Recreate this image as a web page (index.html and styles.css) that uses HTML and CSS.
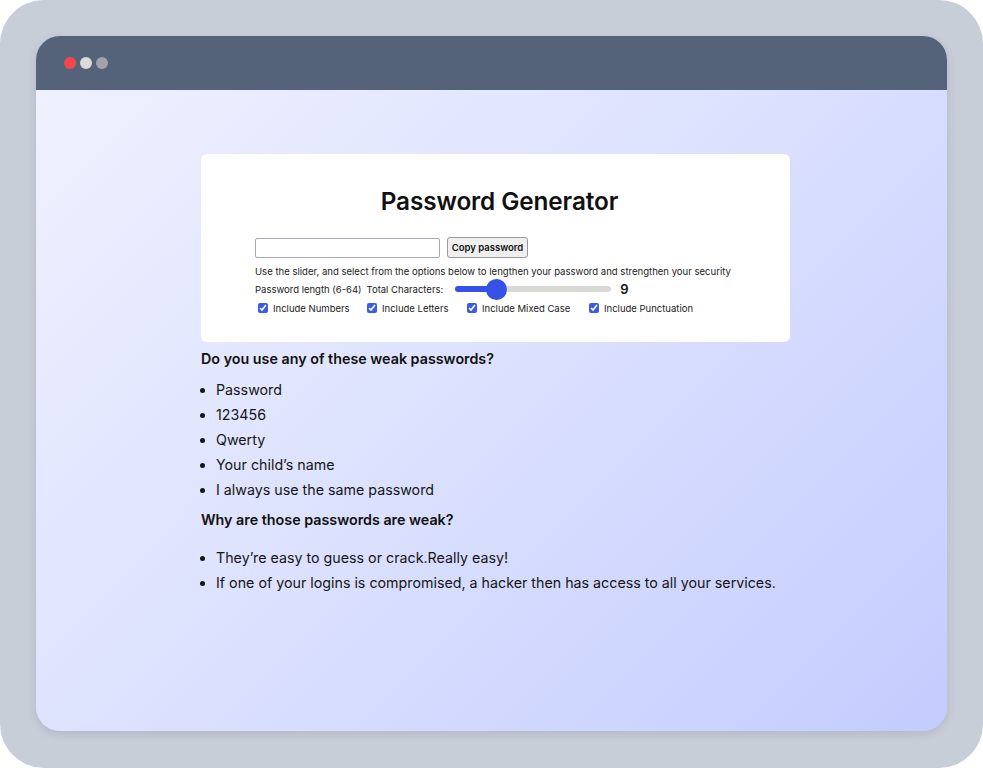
FILE: index.html
```html
<!DOCTYPE html>
<html lang="en">
<head>
<meta charset="utf-8">
<title>Password Generator</title>
<link rel="stylesheet" href="styles.css">
</head>
<body>
<div class="frame">
  <div class="window">
    <div class="titlebar">
      <span class="dot dot-red"></span>
      <span class="dot dot-light"></span>
      <span class="dot dot-gray"></span>
    </div>
    <div class="content">
      <div class="column">
        <div class="card">
          <h1 class="title">Password Generator</h1>
          <div class="row-input">
            <input class="pw-field" type="text" aria-label="Password">
            <button class="copy-btn" type="button">Copy password</button>
          </div>
          <p class="hint">Use the slider, and select from the options below to lengthen your password and strengthen your security</p>
          <div class="row-slider">
            <span class="lbl">Password length (6-64)</span>
            <span class="lbl">Total Characters:</span>
            <div class="slider" role="slider" aria-valuemin="6" aria-valuemax="64" aria-valuenow="9">
              <div class="slider-fill"></div>
              <div class="slider-thumb"></div>
              <div class="slider-rest"></div>
            </div>
            <span class="count">9</span>
          </div>
          <div class="row-checks">
            <label class="check c1"><input type="checkbox" checked>Include Numbers</label>
            <label class="check c2"><input type="checkbox" checked>Include Letters</label>
            <label class="check c3"><input type="checkbox" checked>Include Mixed Case</label>
            <label class="check c4"><input type="checkbox" checked>Include Punctuation</label>
          </div>
        </div>
        <h2 class="q q1">Do you use any of these weak passwords?</h2>
        <ul class="list">
          <li>Password</li>
          <li>123456</li>
          <li>Qwerty</li>
          <li>Your child’s name</li>
          <li>I always use the same password</li>
        </ul>
        <h2 class="q q2">Why are those passwords are weak?</h2>
        <ul class="list list2">
          <li>They’re easy to guess or crack.Really easy!</li>
          <li>If one of your logins is compromised, a hacker then has access to all your services.</li>
        </ul>
      </div>
    </div>
  </div>
</div>
</body>
</html>
```

FILE: styles.css
```css
* { box-sizing: border-box; }
html, body { margin: 0; padding: 0; background: #ffffff; }
body { font-family: Inter, "Noto Sans", sans-serif; color: #111; }

.frame {
  width: 983px;
  height: 768px;
  background: #c8ced8;
  border-radius: 44px;
  padding: 36px;
}

.window {
  width: 911px;
  height: 695px;
  border-radius: 24px;
  overflow: hidden;
  display: flex;
  flex-direction: column;
  box-shadow: 0 3px 8px rgba(80, 90, 110, 0.18);
}

.titlebar {
  height: 54px;
  background: #546379;
  display: flex;
  align-items: center;
  gap: 4px;
  padding-left: 28px;
  flex: none;
}
.dot { width: 12px; height: 12px; border-radius: 50%; display: block; }
.dot-red { background: #f5474a; }
.dot-light { background: #dcdad7; }
.dot-gray { background: #a0a3ab; }

.content {
  flex: 1;
  background: linear-gradient(135deg, #eff1fe 0%, #dde2fe 45%, #c4ccfe 100%);
  padding: 64px 0 0 165px;
}

.column { width: 589px; }

.card {
  background: #fff;
  border-radius: 6px;
  height: 188px;
  padding: 32px 0 0 54px;
}

.title {
  margin: 0 0 21px -54px;
  width: 589px;
  padding-left: 8px;
  text-align: center;
  font-size: 24.3px;
  font-weight: 600;
  line-height: 30px;
  color: #111;
  letter-spacing: -0.1px;
}

.row-input { display: flex; align-items: center; gap: 7px; height: 21px; }
.pw-field {
  width: 185px;
  height: 20px;
  border: 1px solid #a9a9b4;
  border-radius: 2px;
  background: #fff;
  margin: 0;
  padding: 0 4px;
}
.copy-btn {
  width: 81px;
  height: 21px;
  border: 1px solid #9a9a9a;
  border-radius: 3px;
  background: #efefef;
  font-family: Inter, sans-serif;
  font-size: 9.5px;
  font-weight: 600;
  color: #111;
  padding: 0;
  margin: 0;
}

.hint {
  margin: 7px 0 0;
  font-size: 9.56px;
  line-height: 13px;
  color: #222;
}

.row-slider {
  display: flex;
  align-items: center;
  height: 22px;
  margin-top: 0;
  font-size: 9.5px;
  color: #222;
}
.row-slider .lbl { margin-right: 5px; }
.row-slider .lbl + .lbl { margin-right: 12px; }

.slider {
  width: 156px;
  height: 22px;
  display: flex;
  align-items: center;
}
.slider-fill {
  width: 35px;
  height: 6px;
  background: #3451e8;
  border-radius: 3px 0 0 3px;
}
.slider-thumb {
  width: 21px;
  height: 21px;
  border-radius: 50%;
  background: #3451e8;
  flex: none;
  margin: 0 -4px;
  position: relative;
  z-index: 1;
}
.slider-rest {
  flex: 1;
  height: 6px;
  background: #d8d8d5;
  border-radius: 0 3px 3px 0;
}
.count {
  margin-left: 9px;
  font-size: 13px;
  font-weight: 600;
  color: #111;
}

.row-checks {
  display: flex;
  align-items: center;
  height: 16px;
  margin-top: 0;
  font-size: 9.5px;
  color: #222;
}
.check { display: flex; align-items: center; }
.check input {
  width: 10px;
  height: 10px;
  margin: 0 5px 0 3px;
  accent-color: #3a5ae8;
}
.c1 { width: 109px; }
.c2 { width: 100px; }
.c3 { width: 122px; }

.q {
  margin: 7px 0 0;
  font-size: 14.3px;
  font-weight: 600;
  line-height: 20px;
  color: #111;
}
.q2 { margin-top: 8px; }

.list {
  margin: 8px 0 0;
  padding-left: 15px;
  font-size: 14.25px;
  line-height: 25px;
  color: #151515;
}
.list2 { margin-top: 15px; white-space: nowrap; }
```
